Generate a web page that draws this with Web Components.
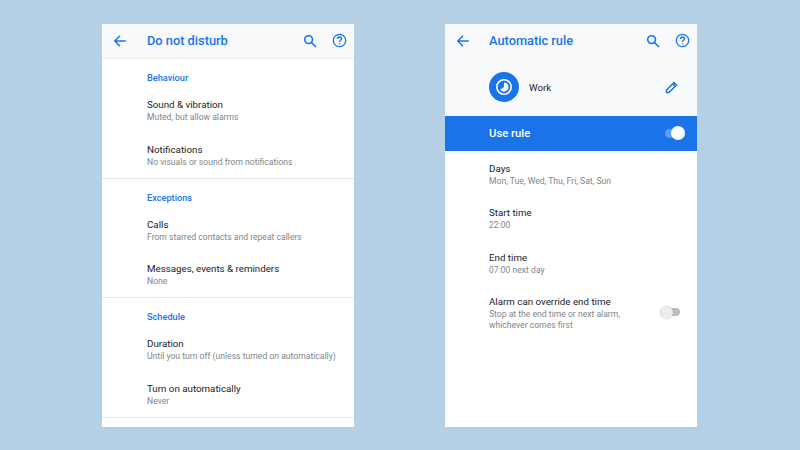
<!DOCTYPE html>
<html>
<head>
<meta charset="utf-8">
<title>Do not disturb</title>
<style>
  html, body { margin: 0; height: 100%; }
  body {
    background: #b6d1e5;
    font-family: Roboto, "Noto Sans", sans-serif;
    display: flex;
    gap: 91px;
    padding: 24px 0 0 102px;
    box-sizing: border-box;
    overflow: hidden;
  }
</style>
</head>
<body>
  <phone-screen>
    <app-bar title="Do not disturb" divided></app-bar>
    <pref-section label="Behaviour">
      <pref-row title="Sound &amp; vibration" sub="Muted, but allow alarms"></pref-row>
      <pref-row title="Notifications" sub="No visuals or sound from notifications"></pref-row>
    </pref-section>
    <pref-section label="Exceptions">
      <pref-row title="Calls" sub="From starred contacts and repeat callers"></pref-row>
      <pref-row title="Messages, events &amp; reminders" sub="None"></pref-row>
    </pref-section>
    <pref-section label="Schedule">
      <pref-row title="Duration" sub="Until you turn off (unless turned on automatically)"></pref-row>
      <pref-row title="Turn on automatically" sub="Never"></pref-row>
    </pref-section>
  </phone-screen>

  <phone-screen style="--title-gap: 19px; --row-inset: 44px; --row-h: 44.4px">
    <app-bar title="Automatic rule"></app-bar>
    <rule-head name="Work"></rule-head>
    <use-rule></use-rule>
    <rule-list>
      <pref-row title="Days" sub="Mon, Tue, Wed, Thu, Fri, Sat, Sun"></pref-row>
      <pref-row title="Start time" sub="22:00"></pref-row>
      <pref-row title="End time" sub="07:00 next day"></pref-row>
      <pref-row title="Alarm can override end time" sub="Stop at the end time or next alarm,&#10;whichever comes first" toggle></pref-row>
    </rule-list>
  </phone-screen>

<script>
class PhoneScreen extends HTMLElement {
  constructor() {
    super();
    this.attachShadow({ mode: "open" });
    this.shadowRoot.innerHTML = `
      <style>
        :host {
          display: flex;
          flex-direction: column;
          width: 252px;
          height: 403px;
          background: #fff;
          overflow: hidden;
        }
      </style>
      <slot></slot>`;
  }
}
customElements.define("phone-screen", PhoneScreen);

class AppBar extends HTMLElement {
  constructor() {
    super();
    this.attachShadow({ mode: "open" });
  }
  connectedCallback() {
    this.shadowRoot.innerHTML = `
      <style>
        :host {
          display: flex;
          align-items: center;
          flex: none;
          height: 33px;
          background: #f8f9fb;
          color: #1a73e8;
          padding: 0 7px 1px 11px;
        }
        :host([divided]) { border-bottom: 1.5px solid #ececec; }
        svg { display: block; fill: none; stroke: currentColor; }
        .back { width: 14px; height: 14px; stroke-width: 1.5; }
        h1 {
          flex: 1;
          margin: 0 0 0 var(--title-gap, 20px);
          font-size: 12.8px;
          font-weight: 500;
        }
        .search { width: 14px; height: 14px; stroke-width: 1.6; margin-right: 15px; }
        .help { width: 15px; height: 15px; stroke-width: 1.3; }
      </style>
      <svg class="back" viewBox="0 0 14 14"><path d="M12.8 7H2M7 1.8 1.8 7 7 12.2"/></svg>
      <h1>${this.getAttribute("title")}</h1>
      <svg class="search" viewBox="0 0 14 14"><circle cx="5.6" cy="5.6" r="3.9"/><path d="M8.5 8.5 13 13"/></svg>
      <svg class="help" viewBox="0 0 15 15">
        <circle cx="7.5" cy="7.5" r="6.2"/>
        <path d="M5.5 6c0-1.2.9-2 2-2s2 .8 2 1.8c0 1.5-2 1.5-2 3.2"/>
        <path d="M7.5 10.2v1.2"/>
      </svg>`;
  }
}
customElements.define("app-bar", AppBar);

class PrefSection extends HTMLElement {
  constructor() {
    super();
    this.attachShadow({ mode: "open" });
  }
  connectedCallback() {
    this.shadowRoot.innerHTML = `
      <style>
        :host {
          display: block;
          flex: none;
          height: 119.5px;
          box-sizing: border-box;
          border-bottom: 1px solid #e6e6e6;
        }
        h2 {
          margin: 0;
          height: 37px;
          padding: 13px 0 0 45px;
          box-sizing: border-box;
          font-size: 9.2px;
          line-height: 12px;
          font-weight: 500;
          color: #1a73e8;
        }
      </style>
      <h2>${this.getAttribute("label")}</h2>
      <slot></slot>`;
  }
}
customElements.define("pref-section", PrefSection);

class PrefRow extends HTMLElement {
  constructor() {
    super();
    this.attachShadow({ mode: "open" });
  }
  connectedCallback() {
    const toggle = this.hasAttribute("toggle")
      ? `<span class="sw"><span class="knob"></span></span>` : "";
    this.shadowRoot.innerHTML = `
      <style>
        :host {
          display: flex;
          align-items: flex-start;
          height: var(--row-h, 44.8px);
          padding: 2px 17px 0 var(--row-inset, 45px);
          box-sizing: border-box;
        }
        .txt { flex: 1; }
        .t { font-size: 9.75px; line-height: 14px; color: #202124; }
        .s { font-size: 8.6px; line-height: 10.5px; color: #80868b; white-space: pre-line; }
        .sw {
          position: relative;
          width: 20px;
          height: 8px;
          border-radius: 4px;
          background: #bdbdbd;
          margin-top: 13px;
        }
        .knob {
          position: absolute;
          left: 0;
          top: -2.5px;
          width: 13px;
          height: 13px;
          border-radius: 50%;
          background: #ececec;
          box-shadow: 0 0 1px rgba(0,0,0,.25);
        }
      </style>
      <div class="txt">
        <div class="t">${this.getAttribute("title")}</div>
        <div class="s">${this.getAttribute("sub")}</div>
      </div>
      ${toggle}`;
  }
}
customElements.define("pref-row", PrefRow);

class RuleHead extends HTMLElement {
  constructor() {
    super();
    this.attachShadow({ mode: "open" });
  }
  connectedCallback() {
    this.shadowRoot.innerHTML = `
      <style>
        :host {
          display: flex;
          align-items: center;
          flex: none;
          height: 58px;
          padding: 0 19px 0 44px;
          background: #f8f9fb;
        }
        .badge {
          width: 30px;
          height: 30px;
          border-radius: 50%;
          background: #1a73e8;
          display: flex;
          align-items: center;
          justify-content: center;
        }
        .name { flex: 1; margin-left: 10px; font-size: 9.7px; color: #202124; }
        svg { display: block; }
      </style>
      <div class="badge">
        <svg width="18" height="18" viewBox="0 0 18 18">
          <circle cx="9" cy="9" r="7.2" fill="none" stroke="#fff" stroke-width="1.6"/>
          <path d="M9 4.4A4.6 4.6 0 1 1 5.2 11.6L9 9Z" fill="#fff"/>
        </svg>
      </div>
      <span class="name">${this.getAttribute("name")}</span>
      <svg width="13" height="13" viewBox="0 0 13 13" fill="none" stroke="#1a73e8" stroke-width="1.5" stroke-linejoin="round">
        <path d="M1.5 11.5V9L9 1.5 11.5 4 4 11.5Z"/><path d="M7.6 2.9l2.5 2.5"/>
      </svg>`;
  }
}
customElements.define("rule-head", RuleHead);

class UseRule extends HTMLElement {
  constructor() {
    super();
    this.attachShadow({ mode: "open" });
    this.shadowRoot.innerHTML = `
      <style>
        :host {
          display: flex;
          align-items: center;
          justify-content: space-between;
          flex: none;
          height: 33.5px;
          padding: 1px 12px 0 44px;
          background: #1a73e8;
          color: #fff;
          font-size: 11.3px;
          font-weight: 500;
        }
        .sw {
          position: relative;
          width: 20px;
          height: 9px;
          margin-top: -1px;
          border-radius: 4.5px;
          background: #5f9cef;
        }
        .knob {
          position: absolute;
          right: 0;
          top: -2.5px;
          width: 14px;
          height: 14px;
          border-radius: 50%;
          background: #fff;
        }
      </style>
      <span>Use rule</span>
      <span class="sw"><span class="knob"></span></span>`;
  }
}
customElements.define("use-rule", UseRule);

class RuleList extends HTMLElement {
  constructor() {
    super();
    this.attachShadow({ mode: "open" });
    this.shadowRoot.innerHTML = `
      <style>:host { display: block; padding-top: 9.5px; }</style>
      <slot></slot>`;
  }
}
customElements.define("rule-list", RuleList);
</script>
</body>
</html>
